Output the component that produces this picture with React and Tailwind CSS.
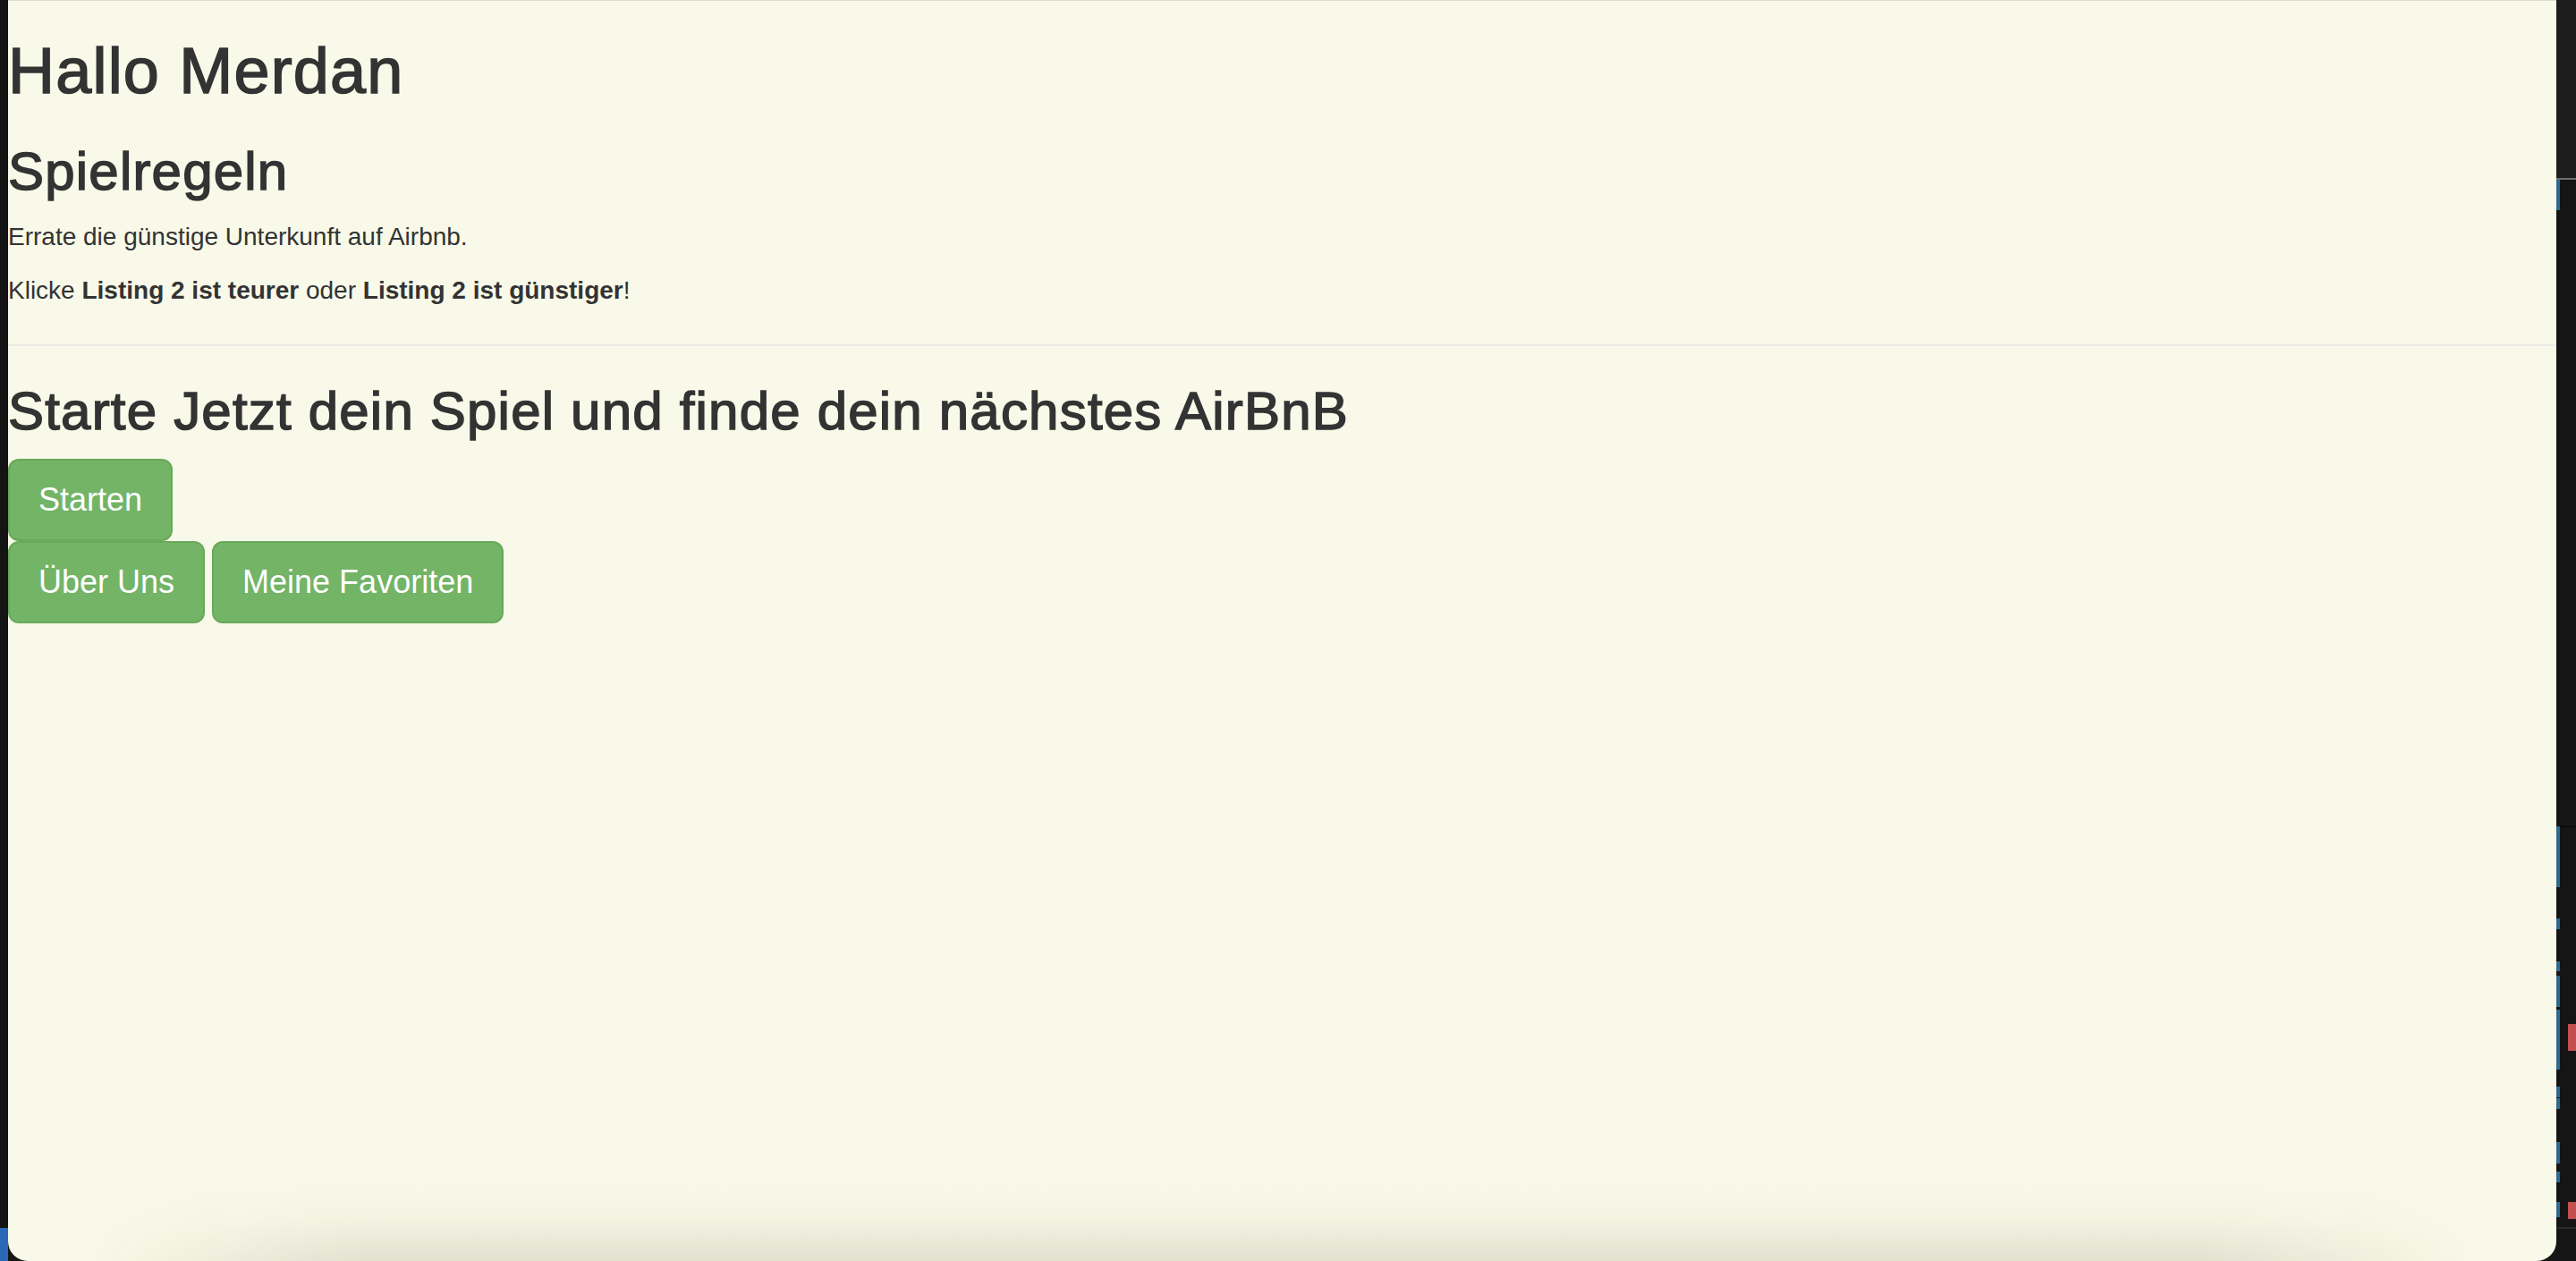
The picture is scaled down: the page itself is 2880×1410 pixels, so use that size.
import React from "react";

const blueMarks = [
  [201, 34],
  [924, 68],
  [1027, 12],
  [1075, 11],
  [1091, 35],
  [1129, 67],
  [1215, 12],
  [1228, 12],
  [1277, 24],
  [1310, 12],
  [1344, 17],
];

const redMarks = [
  [1145, 30],
  [1344, 19],
];

// headings are Helvetica Neue medium in the original, this is the closest look
const heading = "font-normal leading-[1.1] tracking-[1.2px] [-webkit-text-stroke:1.5px_#333333]";

const GreenButton = ({ children }) => (
  <button className="rounded-[12px] border-2 border-[#68a95b] bg-[#73b467] px-[32px] py-[20px] text-[36px] leading-[48px] text-white">
    {children}
  </button>
);

const App = () => {
  return (
    <div className="flex h-[1410px] w-full overflow-hidden bg-[#161616] font-['Liberation_Sans',Arial,sans-serif]">
      {/* left edge of the desktop */}
      <div className="flex w-[9px] flex-col">
        <div className="flex-1 bg-[#141414]" />
        <div className="h-[37px] bg-[#2c68b8]" />
      </div>

      {/* page */}
      <main className="relative flex-1 overflow-hidden rounded-b-[22px] border-t border-[#d9dacb] bg-[#f8f9e8] text-[#333333]">
        <h1 className={`mt-[39px] mb-[20px] text-[72px] ${heading}`}>Hallo Merdan</h1>
        <h2 className={`mt-[40px] mb-[20px] text-[60px] ${heading}`}>Spielregeln</h2>
        <p className="mb-[20px] text-[28px] leading-[40px]">Errate die günstige Unterkunft auf Airbnb.</p>
        <p className="mb-[20px] text-[28px] leading-[40px]">
          Klicke <b>Listing 2 ist teurer</b> oder <b>Listing 2 ist günstiger</b>!
        </p>
        <hr className="mt-[40px] mb-[40px] border-t-2 border-[#ecece6]" />
        <h2 className={`mb-[20px] text-[60px] ${heading}`}>
          Starte Jetzt dein Spiel und finde dein nächstes AirBnB
        </h2>
        <div className="flex">
          <GreenButton>Starten</GreenButton>
        </div>
        <div className="flex gap-[8px]">
          <GreenButton>Über Uns</GreenButton>
          <GreenButton>Meine Favoriten</GreenButton>
        </div>

        {/* window shadow at the bottom */}
        <div className="pointer-events-none absolute bottom-0 left-0 right-0 h-[90px] bg-gradient-to-t from-[rgba(40,40,10,0.11)] via-[rgba(40,40,10,0.03)] to-transparent [mask-image:linear-gradient(to_right,transparent_3%,black_14%,black_86%,transparent_97%)]" />
      </main>

      {/* right edge: editor overview ruler */}
      <div className="relative w-[22px] bg-[#151515]">
        <div className="h-[199px] bg-[#1d1d1d]" />
        <div className="h-[2px] bg-[#6e6e6e]" />
        <div className="absolute left-0 right-0 top-[924px] h-px bg-[#050505]" />
        <div className="absolute left-0 right-0 top-[1372px] h-[2px] bg-[#2a2a2a]" />
        {blueMarks.map(([top, h], i) => (
          <div
            key={i}
            className="absolute left-0 w-[4px] bg-[#2f6a8e]"
            style={{ top, height: h }}
          />
        ))}
        {redMarks.map(([top, h], i) => (
          <div
            key={i}
            className="absolute right-0 w-[9px] bg-[#c44f4f]"
            style={{ top, height: h }}
          />
        ))}
      </div>
    </div>
  );
};

export default App;
